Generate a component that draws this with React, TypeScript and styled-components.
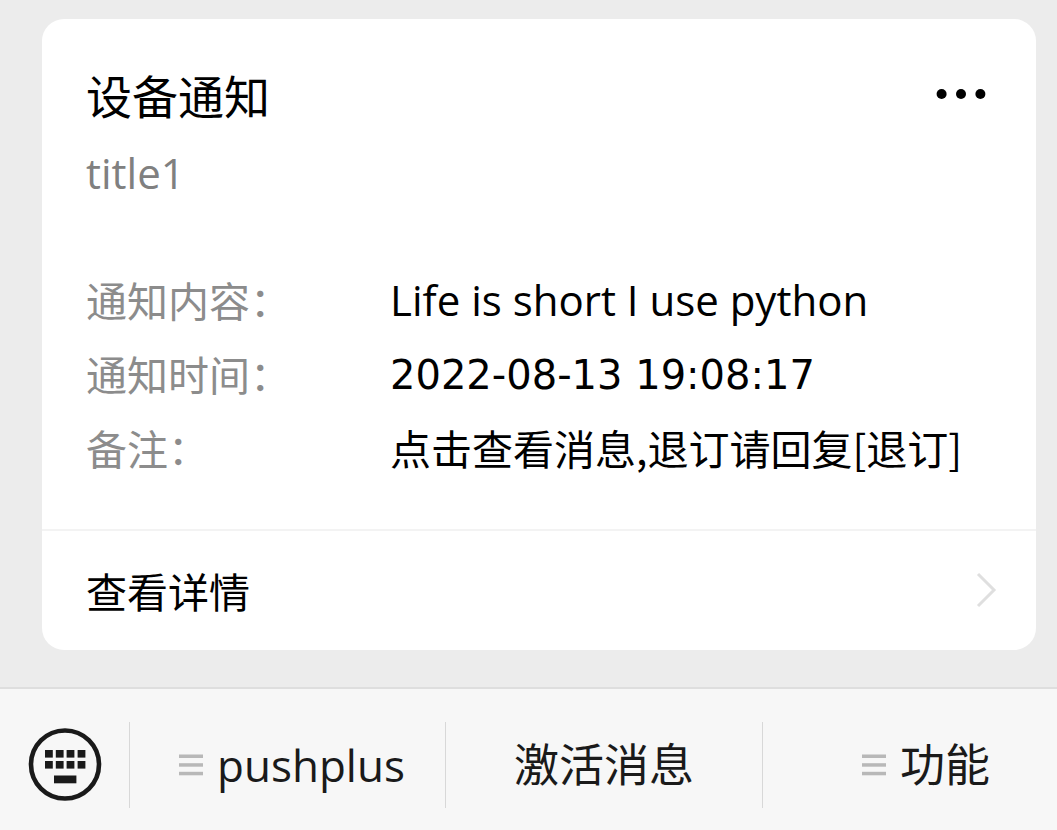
import React from "react";
import styled, { createGlobalStyle } from "styled-components";

const latin = '"Open Sans", "Noto Sans CJK SC", sans-serif';
const han = '"Noto Sans CJK SC", sans-serif';
const time = '"DejaVu Sans", sans-serif';

const GlobalStyle = createGlobalStyle`
  * { box-sizing: border-box; }
  body { margin: 0; background: #f7f7f7; font-family: ${latin}; color: #000; }
  button { border: 0; background: none; padding: 0; font: inherit; color: inherit; cursor: pointer; }
`;

const Page = styled.div`
  min-height: 100vh;
  display: flex;
  flex-direction: column;
`;

const Chat = styled.main`
  flex: 1;
  padding: 19px 21px 37px 42px;
  background: #ececec;
`;

const Card = styled.article`
  background: #fff;
  border-radius: 22px;
`;

const CardBody = styled.div`
  padding: 45px 44px 43px;
`;

const CardHeader = styled.header`
  display: flex;
  align-items: flex-start;
  justify-content: space-between;
`;

const Title = styled.h1`
  margin: 0;
  font: 400 46px/60px ${han};
`;

const MoreButton = styled.button`
  display: flex;
  padding: 24px 6px 0;
`;

const Subtitle = styled.p`
  margin: 20px 0 62px;
  font-size: 42px;
  line-height: 58px;
  color: #808080;
`;

const Details = styled.dl`
  margin: 0;
  display: grid;
  grid-template-columns: 304px 1fr;
  grid-auto-rows: minmax(74px, auto);
`;

const Label = styled.dt`
  font: 400 41px/70px ${han};
  color: #8c8c8c;
`;

const valueFonts = {
  latin: `400 42px/72px ${latin}`,
  time: `400 40px/74px ${time}`,
  han: `400 41px/70px ${han}`,
};

const Value = styled.dd<{ $kind: keyof typeof valueFonts }>`
  margin: 0;
  align-self: ${(p) => (p.$kind === "time" ? "end" : "start")};
  font: ${(p) => valueFonts[p.$kind]};
`;

const DetailLink = styled.a`
  display: flex;
  align-items: center;
  justify-content: space-between;
  padding: 29px 39px 30px 44px;
  border-top: 2px solid #f3f3f3;
  font: 400 41px/60px ${han};
  color: #000;
  text-decoration: none;
`;

const Bar = styled.nav`
  display: grid;
  grid-template-columns: 129px 316fr 317fr 295fr;
  align-items: center;
  height: 143px;
  padding-top: 10px;
  border-top: 2px solid #dedede;
  background: #f7f7f7;
  color: #1a1a1a;
`;

const KeyboardButton = styled.button`
  display: flex;
  justify-content: center;
`;

const MenuButton = styled.button<{ $indent?: number; $latin?: boolean }>`
  display: flex;
  align-items: center;
  justify-content: center;
  gap: 14px;
  height: 86px;
  padding-left: ${(p) => p.$indent ?? 0}px;
  border-left: 1px solid #d8d8d8;
  font-size: ${(p) => (p.$latin ? 44 : 45)}px;
  font-weight: ${(p) => (p.$latin ? 500 : 400)};
  line-height: 60px;
`;

const MenuLines = () => (
  <svg width="24" height="22" viewBox="0 0 24 22" fill="#b8b8b8" aria-hidden="true">
    <rect y="0.5" width="24" height="3.5" />
    <rect y="9.2" width="24" height="3.5" />
    <rect y="17.8" width="24" height="3.5" />
  </svg>
);

const KeyboardIcon = () => (
  <svg width="74" height="74" viewBox="0 0 74 74" fill="#1a1a1a" aria-hidden="true">
    <circle cx="37" cy="36.5" r="34" fill="none" stroke="#1a1a1a" strokeWidth="4.6" />
    {[22, 33].map((y) =>
      [17, 27.8, 38.6, 49.6].map((x) => <rect key={`${x}-${y}`} x={x} y={y} width="7.8" height="7.6" />)
    )}
    <rect x="26" y="47.5" width="22.4" height="7.8" />
  </svg>
);

const details: { label: string; value: string; kind: keyof typeof valueFonts }[] = [
  { label: "通知内容：", value: "Life is short I use python", kind: "latin" },
  { label: "通知时间：", value: "2022-08-13 19:08:17", kind: "time" },
  { label: "备注：", value: "点击查看消息,退订请回复[退订]", kind: "han" },
];

export default function App() {
  return (
    <Page>
      <GlobalStyle />
      <Chat>
        <Card>
          <CardBody>
            <CardHeader>
              <Title>设备通知</Title>
              <MoreButton aria-label="更多">
                <svg width="50" height="12" viewBox="0 0 50 12" aria-hidden="true">
                  <circle cx="5.6" cy="6" r="5" />
                  <circle cx="25" cy="6" r="5" />
                  <circle cx="44.4" cy="6" r="5" />
                </svg>
              </MoreButton>
            </CardHeader>
            <Subtitle>title1</Subtitle>
            <Details>
              {details.map((d) => (
                <React.Fragment key={d.label}>
                  <Label>{d.label}</Label>
                  <Value $kind={d.kind}>{d.value}</Value>
                </React.Fragment>
              ))}
            </Details>
          </CardBody>
          <DetailLink href="#detail">
            查看详情
            <svg width="22" height="38" viewBox="0 0 22 38" fill="none" stroke="#dfdfdf" strokeWidth="3" aria-hidden="true">
              <path d="M3 3 L19 19 L3 35" />
            </svg>
          </DetailLink>
        </Card>
      </Chat>
      <Bar>
        <KeyboardButton aria-label="键盘">
          <KeyboardIcon />
        </KeyboardButton>
        <MenuButton $indent={9} $latin>
          <MenuLines />
          pushplus
        </MenuButton>
        <MenuButton>激活消息</MenuButton>
        <MenuButton $indent={32}>
          <MenuLines />
          功能
        </MenuButton>
      </Bar>
    </Page>
  );
}
